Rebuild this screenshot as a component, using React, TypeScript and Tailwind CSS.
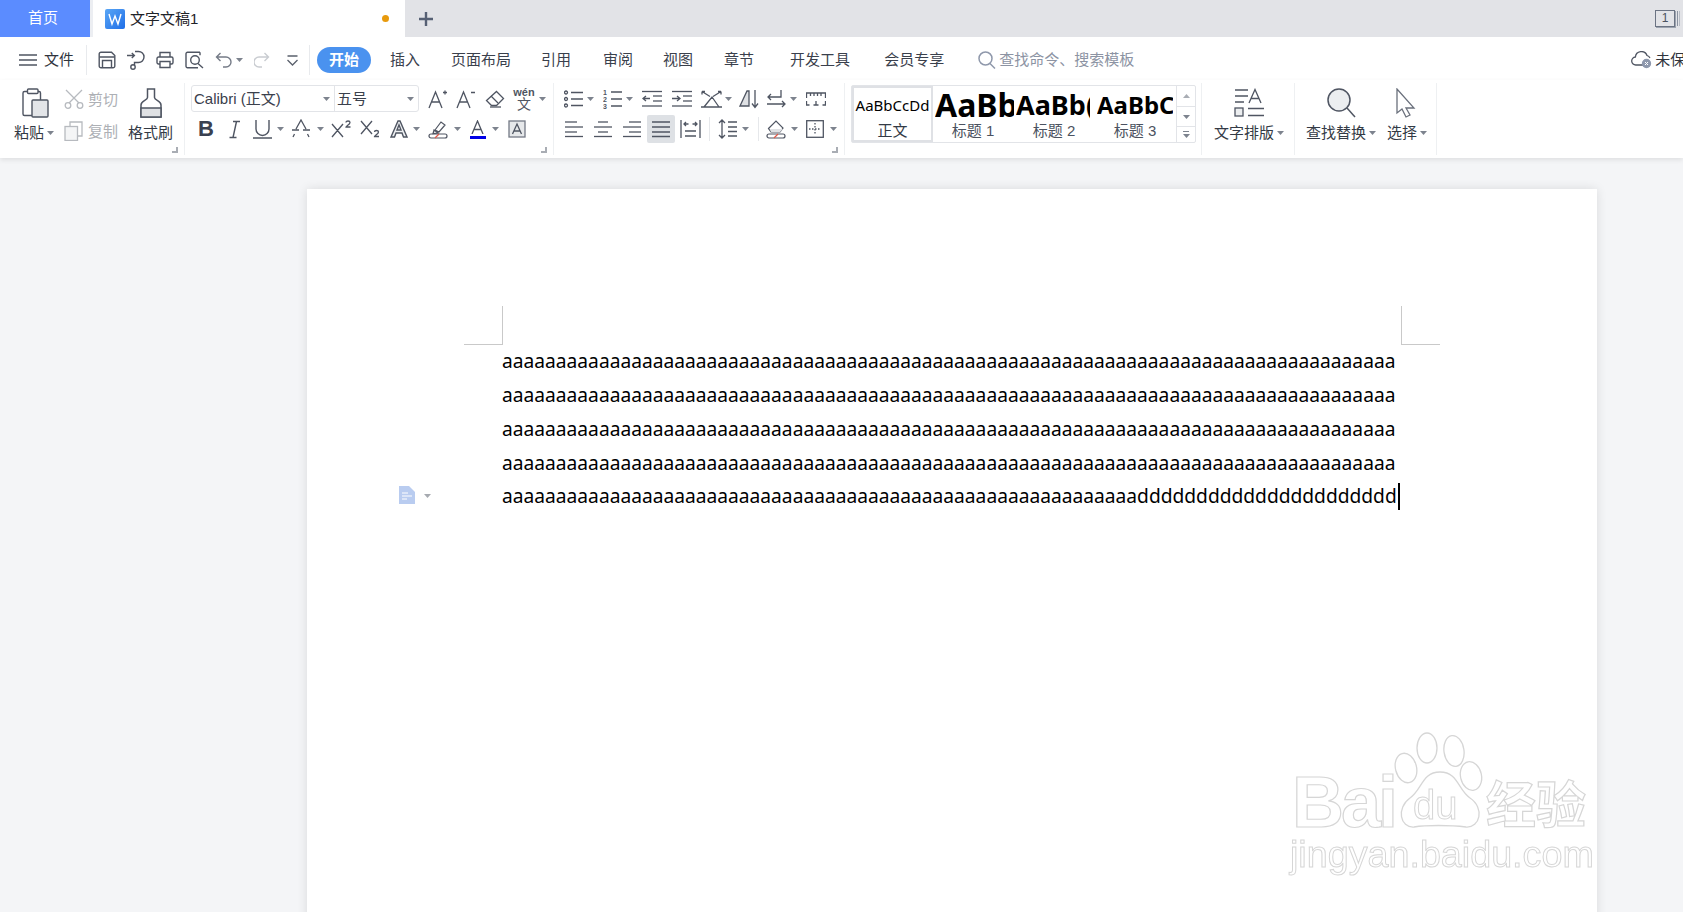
import React from "react";

const C = "#4f5562";
const cjk = "font-['Liberation_Sans','Noto_Sans_CJK_SC',sans-serif]";

function S({ w, h, c = "", sw = 1.4, color = C, children }: { w: number; h: number; c?: string; sw?: number; color?: string; children: React.ReactNode }) {
  return (
    <svg width={w} height={h} viewBox={`0 0 ${w} ${h}`} fill="none" stroke={color} strokeWidth={sw} className={`shrink-0 ${c}`}>
      {children}
    </svg>
  );
}

function Caret({ c = "" }: { c?: string }) {
  return (
    <svg width="7" height="4" viewBox="0 0 7 4" className={`shrink-0 ${c}`}>
      <path d="M0 0h7L3.5 4z" fill="#7d838e" />
    </svg>
  );
}

function Launcher() {
  return (
    <svg width="6" height="6" viewBox="0 0 6 6" className="absolute right-[6px] bottom-[5px]">
      <path d="M5 0v5H0" stroke="#a9adb4" strokeWidth="2" fill="none" />
    </svg>
  );
}

function Sep() {
  return <div className="w-px shrink-0 my-[3px] bg-[#eef0f2]" />;
}

function Nav({ t, c }: { t: string; c: string }) {
  return <span className={`text-[15px] text-[#3a404c] whitespace-nowrap shrink-0 ${c}`}>{t}</span>;
}

function StrikeA() {
  return (
    <S w={18} h={20} sw={1.3}>
      <path d="M4 10L9 1l5 9M0 11h7M11 11h7M1 18l1.5-3M17 18l-1.5-3" />
    </S>
  );
}

function Lines({ ys }: { ys: [number, number, number][] }) {
  return (
    <>
      {ys.map(([y, a, b], i) => (
        <path key={i} d={`M${a} ${y}H${b}`} />
      ))}
    </>
  );
}

function StyleCell({ big, label, cls }: { big: string; label: string; cls: string }) {
  return (
    <div className="w-[81px] shrink-0 h-full flex flex-col items-stretch overflow-hidden pl-[2px]">
      <div className={`h-[37px] leading-[37px] overflow-hidden whitespace-nowrap text-black font-bold font-['Noto_Sans',sans-serif] ${cls}`}>{big}</div>
      <div className="text-[15px] text-[#4b5260] text-center leading-[16px] whitespace-nowrap pr-[3px]">{label}</div>
    </div>
  );
}

export default function App() {
  const aLine = "a".repeat(83);
  return (
    <div className={`w-[1683px] h-[912px] overflow-hidden flex flex-col relative bg-[#f4f5f7] ${cjk}`}>
      {/* tab bar */}
      <div className="h-[37px] shrink-0 bg-[#e2e3e7] flex items-stretch">
        <div className="w-[90px] bg-[#5b8cff] text-white text-[15px] flex items-center justify-center pr-[4px]">首页</div>
        <div className="w-[3px] bg-[#eceef2]" />
        <div className="w-[312px] bg-white flex items-center">
          <svg width="20" height="20" viewBox="0 0 20 20" className="ml-[12px] shrink-0">
            <defs>
              <linearGradient id="wg" x1="0" y1="0" x2="1" y2="1">
                <stop offset="0" stopColor="#5aa6f5" />
                <stop offset="1" stopColor="#1f6fe8" />
              </linearGradient>
            </defs>
            <rect width="20" height="20" rx="2" fill="url(#wg)" />
            <path d="M4 5l3 10 3-8 3 8 3-10" stroke="#fff" strokeWidth="1.4" fill="none" />
          </svg>
          <span className="ml-[5px] mt-[2px] text-[15px] text-[#1f2329]">文字文稿1</span>
          <span className="ml-auto mr-[16px] w-[7px] h-[7px] rounded-full bg-[#e89a0c]" />
        </div>
        <S w={14} h={14} c="ml-[14px] self-center" sw={2.4} color="#566074">
          <path d="M7 0v14M0 7h14" />
        </S>
        <div className="ml-auto flex items-center pr-[3px]">
          <div className="w-[20px] h-[17px] border border-[#6b7383] text-[12px] leading-[15px] text-center text-[#4b5260] shadow-[1px_1px_0_#9ca3af]">1</div>
          <div className="ml-[2px] w-[1px] h-[15px] bg-[#8b93a1]" />
          <div className="ml-[1px] w-[1px] h-[15px] bg-[#b6bbc4]" />
        </div>
      </div>

      {/* menu row */}
      <div className="h-[43px] shrink-0 bg-white flex items-center overflow-hidden pt-[3px]">
        <S w={18} h={12} c="ml-[19px]" sw={1.3}>
          <path d="M0 1h18M0 6h18M0 11h18" />
        </S>
        <span className="ml-[7px] text-[15px] text-[#2f343d] whitespace-nowrap shrink-0">文件</span>
        <div className="ml-[12px] w-px h-[30px] shrink-0 bg-[#e8eaed]" />
        <S w={18} h={18} c="ml-[11px]">
          <path d="M3 1.2h10.5l3.3 3.3V15a1.8 1.8 0 0 1-1.8 1.8H3A1.8 1.8 0 0 1 1.2 15V3A1.8 1.8 0 0 1 3 1.2z" />
          <path d="M1.5 6h15M4.5 16.5V9.5h9v7" />
        </S>
        <S w={18} h={20} c="ml-[11px]">
          <path d="M0 5.5h7M4.8 3l2.6 2.5L4.8 8" />
          <path d="M8 1.5h3.5a5.5 5.5 0 0 1 0 11H7.5v2.5" />
          <circle cx="6" cy="17" r="2.2" />
        </S>
        <S w={18} h={18} c="ml-[11px]">
          <path d="M4 6V1.5h10V6" />
          <path d="M4 13H2.5A1.5 1.5 0 0 1 1 11.5V7.5A1.5 1.5 0 0 1 2.5 6h13A1.5 1.5 0 0 1 17 7.5v4a1.5 1.5 0 0 1-1.5 1.5H14" />
          <path d="M4 10.5h10v6H4z" />
        </S>
        <S w={19} h={18} c="ml-[11px]">
          <path d="M15 1.2H2.5A1.5 1.5 0 0 0 1 2.7v12.6a1.5 1.5 0 0 0 1.5 1.5H13" />
          <circle cx="10" cy="9" r="4.3" />
          <path d="M13 12.5l5 4.5M15 1.2v3" />
        </S>
        <S w={18} h={17} c="ml-[11px]" color="#757b87">
          <path d="M5.5 1L1.5 5l4 4M1.5 5H11a5 5 0 0 1 0 10H8" />
        </S>
        <Caret c="ml-[3px]" />
        <S w={16} h={17} c="ml-[11px]" color="#c9ccd1">
          <path d="M10.5 1l4 4-4 4M14.5 5H5a4.5 4.5 0 0 0 0 10h3" />
        </S>
        <S w={11} h={11} c="ml-[17px]" sw={1.3} color="#5a606c">
          <path d="M.5 1h10M.5 5l5 5 5-5" />
        </S>
        <div className="ml-[11px] w-px h-[30px] shrink-0 bg-[#e8eaed]" />
        <div className="ml-[7px] w-[54px] h-[26px] shrink-0 rounded-full bg-[#4a92ef] text-white text-[15px] font-bold flex items-center justify-center">开始</div>
        <Nav t="插入" c="ml-[19px]" />
        <Nav t="页面布局" c="ml-[31px]" />
        <Nav t="引用" c="ml-[30px]" />
        <Nav t="审阅" c="ml-[32px]" />
        <Nav t="视图" c="ml-[30px]" />
        <Nav t="章节" c="ml-[31px]" />
        <Nav t="开发工具" c="ml-[36px]" />
        <Nav t="会员专享" c="ml-[34px]" />
        <S w={18} h={18} c="ml-[34px]" sw={1.5} color="#8f98ab">
          <circle cx="7.5" cy="7.5" r="6.5" />
          <path d="M12 12.5l5 5" />
        </S>
        <span className="ml-[3px] text-[15px] text-[#8c93a3] whitespace-nowrap shrink-0">查找命令、搜索模板</span>
        <svg width="22" height="18" viewBox="0 0 22 18" className="ml-[497px] shrink-0" fill="none" stroke="#4f5562" strokeWidth="1.3">
          <path d="M13 14H5a4 4 0 0 1-.6-8A6 6 0 0 1 16 4.5a5 5 0 0 1 3 2.5" />
          <circle cx="15.5" cy="12.5" r="4" fill="#8e98ad" stroke="#8e98ad" />
          <path d="M14 11l3 3M17 11l-3 3" stroke="#fff" strokeWidth="1" />
        </svg>
        <span className="ml-[2px] text-[15px] text-[#2f343d] whitespace-nowrap shrink-0">未保存</span>
      </div>

      {/* ribbon */}
      <div className="h-[78px] shrink-0 bg-white flex items-stretch relative z-10 shadow-[0_2px_5px_rgba(0,0,0,0.09)] overflow-hidden">
        {/* clipboard */}
        <div className="w-[184px] shrink-0 flex relative pt-[8px]">
          <div className="ml-[14px] w-[42px] flex flex-col">
            <S w={27} h={30} c="ml-[8px]">
              <path d="M6 3.5H2.5A1.5 1.5 0 0 0 1 5v21a1.5 1.5 0 0 0 1.5 1.5H10" />
              <path d="M16 3.5h1a1.5 1.5 0 0 1 1.5 1.5v7" />
              <rect x="5.5" y="1" width="10.5" height="4.5" rx="1" />
              <rect x="10" y="12" width="16" height="17" rx="1" fill="#e3e5e8" />
            </S>
            <div className="mt-[6px] flex items-center whitespace-nowrap text-[15px] leading-[18px] text-[#333a45]">
              粘贴<Caret c="ml-[3px]" />
            </div>
          </div>
          <div className="ml-[8px] w-[54px] flex flex-col">
            <div className="flex items-center h-[22px]">
              <S w={20} h={20} color="#b7babf" sw={1.3}>
                <path d="M2 1l13 13M18 1L5 14" />
                <circle cx="4" cy="16.5" r="2.8" />
                <circle cx="16" cy="16.5" r="2.8" />
              </S>
              <span className="ml-[4px] mt-[2px] text-[15px] text-[#adb0b5] whitespace-nowrap">剪切</span>
            </div>
            <div className="flex items-center h-[22px] mt-[10px]">
              <S w={19} h={20} color="#b7babf" sw={1.3}>
                <path d="M6 5.5V1h12v14h-4.5" />
                <rect x="1" y="5.5" width="12.5" height="14" fill="#f4f5f6" />
              </S>
              <span className="ml-[5px] mt-[2px] text-[15px] text-[#adb0b5] whitespace-nowrap">复制</span>
            </div>
          </div>
          <div className="ml-[10px] w-[45px] flex flex-col items-center">
            <S w={22} h={30} sw={1.5}>
              <path d="M7.5 1h7v8.5c0 3 6.5 3 6.5 7.5v12H1V17c0-4.5 6.5-4.5 6.5-7.5z" />
              <path d="M1 20h20v9H1z" fill="#dfe1e4" />
            </S>
            <div className="mt-[6px] whitespace-nowrap text-[15px] leading-[18px] text-[#333a45]">格式刷</div>
          </div>
          <Launcher />
        </div>
        <Sep />

        {/* font */}
        <div className="w-[368px] shrink-0 flex flex-col pt-[5px] relative">
          <div className="flex items-center h-[27px]">
            <div className="ml-[6px] w-[228px] h-[27px] shrink-0 border border-[#e2e4e8] rounded-[3px] flex items-center">
              <div className="w-[143px] h-full border-r border-[#e2e4e8] flex items-center pl-[2px]">
                <span className="mt-[2px] text-[15px] text-[#3a404c] whitespace-nowrap">Calibri (正文)</span>
                <Caret c="ml-auto mr-[4px]" />
              </div>
              <div className="flex-1 flex items-center pl-[2px]">
                <span className="mt-[2px] text-[15px] text-[#3a404c]">五号</span>
                <Caret c="ml-auto mr-[4px]" />
              </div>
            </div>
            <S w={19} h={20} c="ml-[9px]" sw={1.3}>
              <path d="M1 19L7.5 3 14 19M3.5 13h8M15 3.5h4M17 1.5v4" />
            </S>
            <S w={19} h={20} c="ml-[9px]" sw={1.3}>
              <path d="M1 19L7.5 3 14 19M3.5 13h8M15 3.5h4" />
            </S>
            <S w={20} h={18} c="ml-[10px]" sw={1.3}>
              <path d="M11.5 1.5l7 7-7 7H6.5l-5-5z" />
              <path d="M6 6l7 7" />
              <path d="M5 17h11" />
            </S>
            <div className="ml-[9px] w-[20px] shrink-0 flex flex-col items-center">
              <span className="text-[11px] leading-[10px] font-bold text-[#4f5562] font-['Liberation_Sans',sans-serif]">wén</span>
              <span className="text-[14px] leading-[14px] text-[#4f5562]">文</span>
            </div>
            <Caret c="ml-[5px]" />
          </div>
          <div className="flex items-center h-[20px] mt-[7px]">
            <span className="ml-[13px] w-[15px] text-[22px] leading-[20px] font-bold text-[#3a4150] font-['Liberation_Sans',sans-serif]">B</span>
            <S w={11} h={19} c="ml-[16px]" sw={1.4}>
              <path d="M4 1.5h7M.5 17.5h7M7.5 1.5l-3.5 16" />
            </S>
            <S w={19} h={20} c="ml-[13px]" sw={1.4}>
              <path d="M3 1v9a6.5 6.5 0 0 0 13 0V1M0 19h19" />
            </S>
            <Caret c="ml-[5px]" />
            <div className="ml-[8px]"><StrikeA /></div>
            <Caret c="ml-[7px]" />
            <S w={21} h={18} c="ml-[7px]" sw={1.3}>
              <path d="M1 4l11 13M12 4L1 17M15 2.5c0-2 4-2 4 0S15 6 15 7h4.5" />
            </S>
            <S w={20} h={18} c="ml-[8px]" sw={1.3}>
              <path d="M1 1l11 13M12 1L1 14M14.5 12c0-2 4-2 4 0s-4 3.5-4 4.5h4.5" />
            </S>
            <S w={18} h={18} c="ml-[10px]" sw={1.4}>
              <path d="M1 17L8 1h2l7 16h-3.5l-1.5-4H6l-1.5 4zM7 10h4L9 5z" fill="#eef0f2" />
            </S>
            <Caret c="ml-[5px]" />
            <S w={20} h={20} c="ml-[8px]" sw={1.2}>
              <path d="M7 11l6-8 4 3-6 7z M6 11l4 3-5 .5z" />
              <rect x="1" y="15" width="18" height="4" rx="2" />
              <path d="M7 19l4-4" stroke="#e05a4a" />
            </S>
            <Caret c="ml-[6px]" />
            <div className="ml-[8px] w-[17px] shrink-0 flex flex-col items-center">
              <S w={17} h={14} sw={1.3}>
                <path d="M3 14L8.5 1 14 14M5 9.5h7" />
              </S>
              <div className="mt-[2px] w-[16px] h-[3px] bg-[#0000e6]" />
            </div>
            <Caret c="ml-[6px]" />
            <S w={18} h={18} c="ml-[9px]" sw={1.3}>
              <rect x="1" y="1" width="16" height="16" fill="#e6e8ea" stroke="#737985" />
              <path d="M4.5 14L9 4l4.5 10M6 11h6" />
            </S>
          </div>
          <Launcher />
        </div>
        <Sep />

        {/* paragraph */}
        <div className="w-[290px] shrink-0 flex flex-col pt-[9px] relative">
          <div className="flex items-center h-[20px]">
            <S w={19} h={18} c="ml-[10px]" sw={1.3}>
              <circle cx="2" cy="2.5" r="1.5" />
              <circle cx="2" cy="9" r="1.5" />
              <circle cx="2" cy="15.5" r="1.5" />
              <path d="M7 2.5h12M7 9h12M7 15.5h12" />
            </S>
            <Caret c="ml-[4px]" />
            <svg width="19" height="20" viewBox="0 0 19 20" className="ml-[9px] shrink-0" stroke={C} strokeWidth="1.3">
              <text x="0" y="6" fontSize="7" stroke="none" fill={C} fontWeight="bold">1</text>
              <text x="0" y="13" fontSize="7" stroke="none" fill={C} fontWeight="bold">2</text>
              <text x="0" y="20" fontSize="7" stroke="none" fill={C} fontWeight="bold">3</text>
              <path d="M8 3h11M8 10h11M8 17h11" />
            </svg>
            <Caret c="ml-[4px]" />
            <S w={20} h={18} c="ml-[9px]" sw={1.3}>
              <Lines ys={[[1.5, 0, 20], [6, 11, 20], [11, 11, 20], [16, 0, 20]]} />
              <path d="M8 8.5H1M4 6l-3 2.5L4 11" />
            </S>
            <S w={20} h={18} c="ml-[10px]" sw={1.3}>
              <Lines ys={[[1.5, 0, 20], [6, 11, 20], [11, 11, 20], [16, 0, 20]]} />
              <path d="M0 8.5h8M5 6l3 2.5L5 11" />
            </S>
            <S w={21} h={18} c="ml-[9px]" sw={1.3}>
              <path d="M0 17h21M3 17l8-10 7 10M1 1.5l8 5M20 1.5l-8 5M1 1.5l3 0M1 1.5v3M20 1.5h-3M20 1.5v3" />
            </S>
            <Caret c="ml-[3px]" />
            <S w={20} h={20} c="ml-[7px]" sw={1.3}>
              <path d="M1 17L8 2h2v15z" fill="#dfe1e4" />
              <path d="M16 1v17M13 14.5l3 4 3-4" />
            </S>
            <S w={19} h={20} c="ml-[8px]" sw={1.3}>
              <path d="M14 1v7H1M4 5L1 8l3 3" />
              <path d="M0 15h18M15 12l3 3-3 3" />
            </S>
            <Caret c="ml-[4px]" />
            <S w={20} h={14} c="ml-[9px]" sw={1.3}>
              <path d="M.5 6V1h19v5M4.5 1v3M8 1v3M11.5 1v3M15 1v3" />
              <path d="M.5 9v4h3M19.5 9v4h-3M10 9v4M7.5 13h5" />
            </S>
          </div>
          <div className="flex items-center h-[28px] mt-[6px]">
            <S w={18} h={18} c="ml-[11px]" sw={1.3}>
              <Lines ys={[[2, 0, 12], [7, 0, 18], [12, 0, 12], [16.5, 0, 18]]} />
            </S>
            <S w={18} h={18} c="ml-[11px]" sw={1.3}>
              <Lines ys={[[2, 4, 14], [7, 0, 18], [12, 4, 14], [16.5, 0, 18]]} />
            </S>
            <S w={18} h={18} c="ml-[11px]" sw={1.3}>
              <Lines ys={[[2, 6, 18], [7, 0, 18], [12, 6, 18], [16.5, 0, 18]]} />
            </S>
            <div className="ml-[6px] w-[28px] h-[28px] shrink-0 bg-[#dee1e5] rounded-[2px] flex items-center justify-center">
              <S w={18} h={18} sw={1.5}>
                <Lines ys={[[2, 0, 18], [7, 0, 18], [12, 0, 18], [16.5, 0, 18]]} />
              </S>
            </div>
            <S w={21} h={20} c="ml-[5px]" sw={1.3}>
              <path d="M1 1v18M20 1v18M5 12h11M5 17h11" />
              <path d="M8.5 5H4M6 3L4 5l2 2M12.5 5H17M15 3l2 2-2 2" />
            </S>
            <div className="ml-[8px] w-px h-[24px] bg-[#e6e8eb] shrink-0" />
            <S w={19} h={20} c="ml-[8px]" sw={1.3}>
              <path d="M4 1v18M1 4l3-3 3 3M1 16l3 3 3-3M10 3h9M10 8h9M10 12.5h9M10 17h9" />
            </S>
            <Caret c="ml-[5px]" />
            <div className="ml-[9px] w-px h-[24px] bg-[#e6e8eb] shrink-0" />
            <S w={20} h={20} c="ml-[7px]" sw={1.2}>
              <path d="M2.5 9.5L10 2l7 7-3 4H5z" />
              <path d="M5 13l-1-3h13l-3 3z" fill="#dfe1e4" stroke="none" />
              <rect x="1" y="15" width="18" height="4" rx="2" />
              <path d="M8 19l4-4" stroke="#e05a4a" />
            </S>
            <Caret c="ml-[5px]" />
            <S w={18} h={18} c="ml-[8px]" sw={1.3}>
              <rect x=".7" y=".7" width="16.6" height="16.6" />
              <path d="M9 3v12M3 9h12" strokeDasharray="1.5 1.5" />
            </S>
            <Caret c="ml-[6px]" />
          </div>
          <Launcher />
        </div>
        <Sep />

        {/* styles */}
        <div className="w-[356px] shrink-0 pt-[5px] pl-[6px]">
          <div className="w-[345px] h-[58px] border border-[#e2e4e8] rounded-[2px] flex">
            <div className="w-[81px] shrink-0 h-full border-2 border-[#dfe1e5] flex flex-col items-center overflow-hidden">
              <div className="h-[35px] flex items-center text-[15px] whitespace-nowrap text-black font-['Noto_Sans',sans-serif]">AaBbCcDd</div>
              <div className="text-[15px] text-[#333a45] leading-[16px] whitespace-nowrap">正文</div>
            </div>
            <StyleCell big="AaBb" label="标题 1" cls="text-[32px]" />
            <StyleCell big="AaBb(" label="标题 2" cls="text-[27px] mr-[5px]" />
            <StyleCell big="AaBbCc" label="标题 3" cls="text-[24px] mr-[3px]" />
            <div className="flex-1 border-l border-[#e2e4e8] flex flex-col">
              <div className="h-[20px] flex items-center justify-center">
                <svg width="7" height="4" viewBox="0 0 7 4"><path d="M0 4h7L3.5 0z" fill="#a9adb4" /></svg>
              </div>
              <div className="h-[20px] border-t border-[#e2e4e8] flex items-center justify-center">
                <Caret />
              </div>
              <div className="flex-1 border-t border-[#e2e4e8] flex flex-col items-center justify-center">
                <div className="w-[6px] h-px bg-[#7d838e]" />
                <Caret c="mt-[2px]" />
              </div>
            </div>
          </div>
        </div>
        <Sep />

        {/* layout */}
        <div className="w-[92px] shrink-0 pt-[8px] flex flex-col items-start">
          <S w={30} h={30} c="ml-[32px]" sw={1.3}>
            <path d="M1 2h13M1 8h13M1 14h9" />
            <path d="M15 15L21 1.5 27 15M17 10.5h8" />
            <rect x="1" y="20" width="8" height="8" fill="#eceef0" />
            <path d="M14 20.5h16M14 27.5h16" />
          </S>
          <div className="mt-[6px] ml-[12px] flex items-center whitespace-nowrap text-[15px] leading-[18px] text-[#333a45]">
            文字排版<Caret c="ml-[3px]" />
          </div>
        </div>
        <Sep />

        {/* find & select */}
        <div className="w-[141px] shrink-0 flex pt-[8px]">
          <div className="ml-[11px] w-[78px] flex flex-col items-start">
            <S w={29} h={30} c="ml-[21px]" sw={1.5}>
              <circle cx="12" cy="12" r="11" fill="#eceef0" />
              <path d="M20 20l8 9" />
            </S>
            <div className="mt-[6px] flex items-center whitespace-nowrap text-[15px] leading-[18px] text-[#333a45]">
              查找替换<Caret c="ml-[3px]" />
            </div>
          </div>
          <div className="ml-[3px] w-[44px] flex flex-col items-start">
            <S w={20} h={30} c="ml-[9px]" sw={1.3} color="#6a707c">
              <path d="M1 1v24l5-4 4 8 4-2-4-7h8z" />
            </S>
            <div className="mt-[6px] flex items-center whitespace-nowrap text-[15px] leading-[18px] text-[#333a45]">
              选择<Caret c="ml-[3px]" />
            </div>
          </div>
        </div>
        <Sep />
      </div>

      {/* document */}
      <div className="flex-1 min-h-0 pt-[31px] pl-[307px] overflow-hidden">
        <div className="w-[1290px] h-[800px] bg-white shadow-[0_0_10px_rgba(0,0,0,0.11)] pt-[117px] font-['Noto_Sans',sans-serif]">
          <div className="flex justify-between px-[157px]">
            <div className="w-[39px] h-[39px] border-r border-b border-[#c9c9c9]" />
            <div className="w-[39px] h-[39px] border-l border-b border-[#c9c9c9]" />
          </div>
          <div className="ml-[195px] -mt-px text-[19.2px] leading-[34px] text-black whitespace-nowrap">
            <div>{aLine}</div>
            <div>{aLine}</div>
            <div>{aLine}</div>
            <div>{aLine}</div>
            <div className="relative -mt-px flex items-center h-[34px]">
              <svg width="34" height="18" viewBox="0 0 34 18" className="absolute left-[-103px] top-[7px]">
                <path d="M0 0h10l6 6v12H0z" fill="#b9ccf0" />
                <path d="M3 7h6M3 10h10M3 13h5" stroke="#fff" strokeWidth="1" />
                <path d="M25 8h7l-3.5 4z" fill="#a6aab0" />
              </svg>
              <span>{"a".repeat(59)}{"d".repeat(22)}</span>
              <span className="ml-[1px] w-[2px] h-[27px] bg-black" />
            </div>
          </div>
        </div>
      </div>

      {/* watermark */}
      <div className="absolute left-[1280px] top-[720px] w-[403px] h-[192px] pointer-events-none blur-[0.4px]">
        <svg width="403" height="192" viewBox="0 0 403 192" className="absolute left-0 top-0" fill="#fff" stroke="#d6d6d6" strokeWidth="1.3">
          <ellipse cx="126" cy="48" rx="10.5" ry="15" transform="rotate(-15 126 48)" />
          <ellipse cx="147" cy="28" rx="10" ry="15" />
          <ellipse cx="174" cy="31" rx="10" ry="15.5" transform="rotate(-8 174 31)" />
          <ellipse cx="191" cy="56" rx="10.5" ry="14.5" transform="rotate(-12 191 56)" />
          <path d="M160 52C178 52 178 70 190 78C205 88 200 108 186 107C170 105 146 105 134 107C120 108 116 88 130 78C142 70 142 52 160 52Z" />
          <text x="133" y="99" fontSize="40" fontFamily="Liberation Sans, sans-serif" strokeWidth="1">du</text>
        </svg>
        <div className="absolute left-[12px] top-[54px] text-[72px] leading-[56px] font-bold text-white [-webkit-text-stroke:1.2px_#d6d6d6] font-['Liberation_Sans',sans-serif] tracking-[-3px]">Bai</div>
        <div className="absolute left-[206px] top-[51px] text-[50px] leading-[60px] font-bold text-white [-webkit-text-stroke:1.2px_#d6d6d6] font-['Noto_Sans_CJK_SC',sans-serif] whitespace-nowrap">经验</div>
        <div className="absolute left-[10px] top-[112px] text-[37.7px] leading-[44px] text-white [-webkit-text-stroke:1px_#d6d6d6] font-['Liberation_Sans',sans-serif] whitespace-nowrap">jingyan.baidu.com</div>
      </div>
    </div>
  );
}
